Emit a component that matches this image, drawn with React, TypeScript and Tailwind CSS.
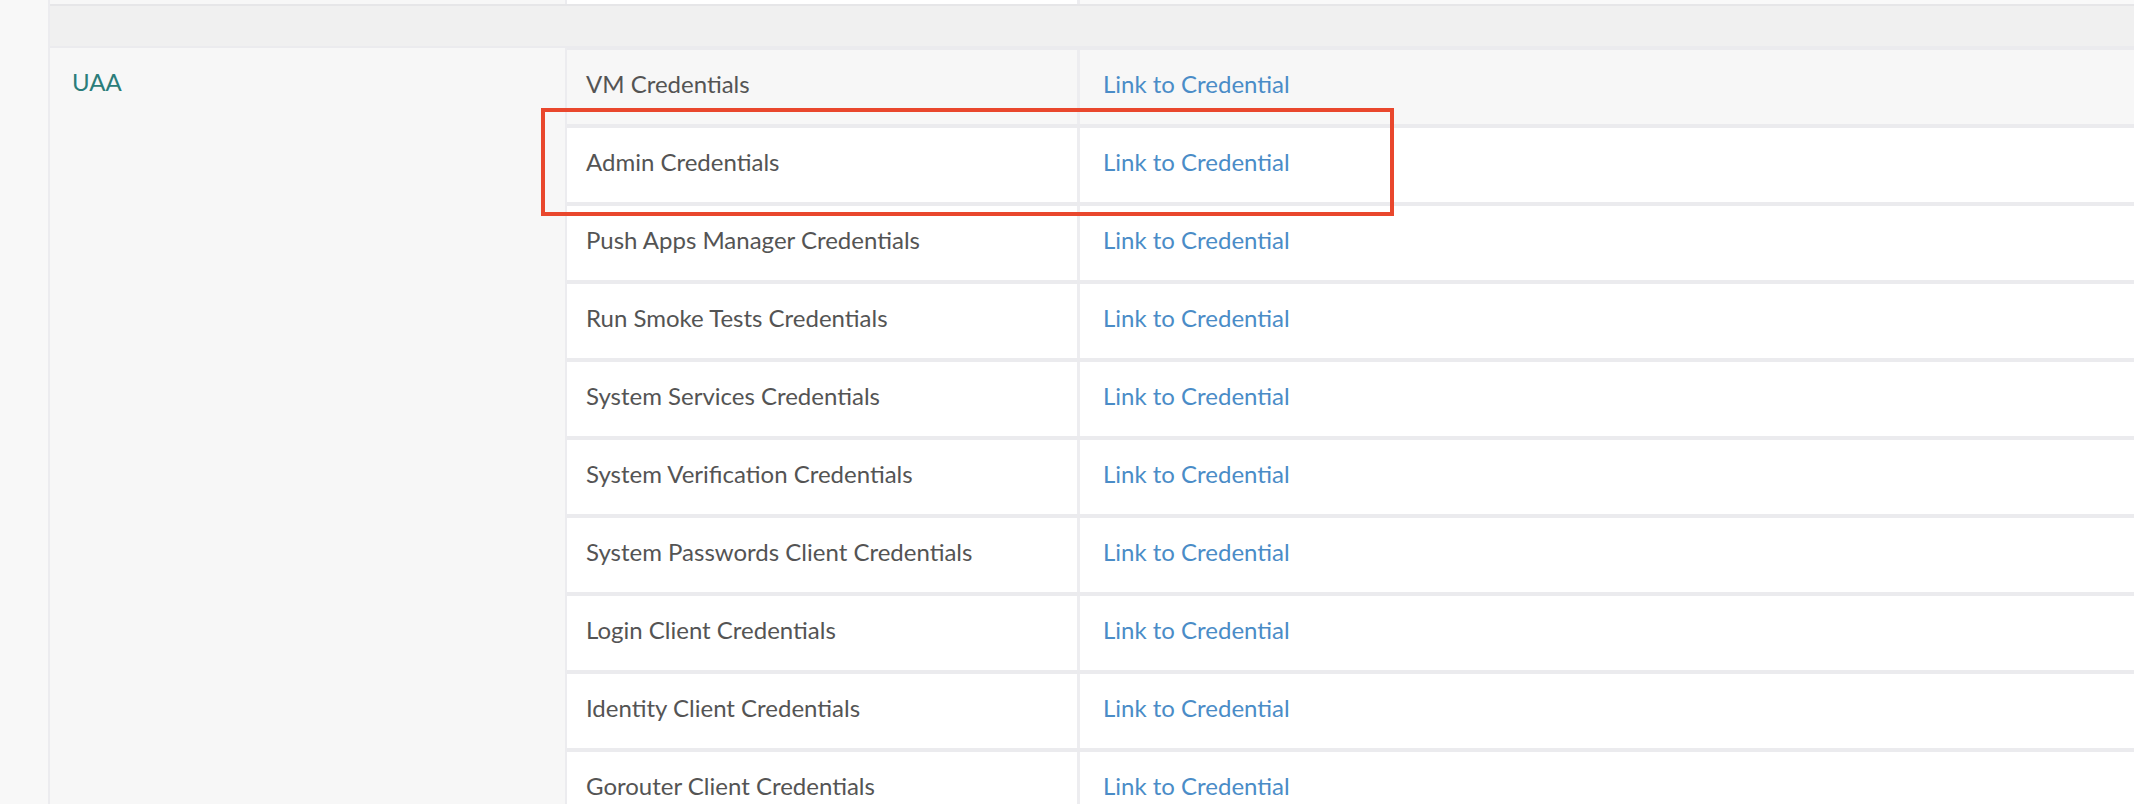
const credentials = [
  "VM Credentials",
  "Admin Credentials",
  "Push Apps Manager Credentials",
  "Run Smoke Tests Credentials",
  "System Services Credentials",
  "System Verification Credentials",
  "System Passwords Client Credentials",
  "Login Client Credentials",
  "Identity Client Credentials",
  "Gorouter Client Credentials",
];

const CredentialRow = ({ name, shaded }: { name: string; shaded: boolean }) => (
  <div
    className={`flex h-[78px] shrink-0 border-b-4 border-[#ebebee] ${
      shaded ? "bg-[#f7f7f7]" : "bg-white"
    }`}
  >
    <div className="w-[513px] shrink-0 border-r-[3px] border-[#ededf0] pl-[19px] pt-[19px] text-[#545454]">
      {name}
    </div>
    <div className="flex-1 pl-[23px] pt-[19px]">
      <a href="#" className="text-[#4a8cc7]">
        Link to Credential
      </a>
    </div>
  </div>
);

export default function App() {
  return (
    <div
      className="relative flex h-[804px] w-[2134px] overflow-hidden bg-white text-[24px] leading-[30px]"
      style={{ fontFamily: "Lato, 'Liberation Sans', sans-serif" }}
    >
      <div className="w-[50px] shrink-0 border-r-2 border-[#ececef] bg-[#f8f8f8]" />

      <div className="flex flex-1 flex-col">
        {/* tail of the previous row */}
        <div className="flex h-[4px] shrink-0 bg-[#f8f8f8]">
          <div className="w-[517px] border-r-2 border-[#ececef] bg-[#f7f7f7]" />
          <div className="w-[513px] border-r-[3px] border-[#ededf0] bg-white" />
          <div className="flex-1 bg-[#f9f9f9]" />
        </div>

        {/* group separator */}
        <div className="h-[44px] shrink-0 border-y-2 border-t-[#e6e6e8] border-b-[#ebebee] bg-[#f0f0f0]" />

        <div className="flex flex-1">
          <div className="w-[517px] shrink-0 border-r-2 border-[#ececef] bg-[#f7f7f7] pl-[22px] pt-[19px] text-[#2b7d7a]">
            UAA
          </div>
          <div className="flex flex-1 flex-col border-t-2 border-[#ebebee]">
            {credentials.map((name, i) => (
              <CredentialRow key={name} name={name} shaded={i === 0} />
            ))}
          </div>
        </div>
      </div>

      {/* highlight annotation */}
      <div className="pointer-events-none absolute left-[541px] top-[108px] h-[108px] w-[853px] border-4 border-[#e9472d]" />
    </div>
  );
}
